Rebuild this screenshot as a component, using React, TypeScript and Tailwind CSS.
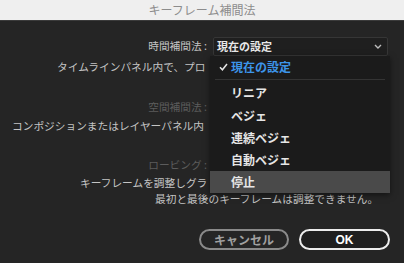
const menuItems = ["リニア", "ベジェ", "連続ベジェ", "自動ベジェ", "停止"];

function Chevron() {
  return (
    <svg width="8" height="5" viewBox="0 0 8 5" className="block">
      <path d="M1 1l3 3 3-3" fill="none" stroke="#bdbdbd" strokeWidth="1.4" />
    </svg>
  );
}

function Check() {
  return (
    <svg width="9" height="8" viewBox="0 0 9 8" className="block">
      <path d="M1 4.3l2.4 2.5L8 1" fill="none" stroke="#e6e6e6" strokeWidth="1.5" />
    </svg>
  );
}

export default function App() {
  return (
    <div className="w-[404px] h-[263px] overflow-hidden bg-[#252525] font-['Noto_Sans_CJK_JP',sans-serif] text-[10.7px] text-[#c4c4c4]">
      {/* Title bar */}
      <div className="h-[21px] bg-[#efefef] border-b border-[#3b3b3b] flex items-center justify-center text-[12px] text-[#8c8c8c]">
        キーフレーム補間法
      </div>

      {/* Time interpolation */}
      <div className="mt-[16px] h-[19px] flex items-center">
        <div className="w-[207px] text-right whitespace-nowrap">時間補間法 :</div>
        <div className="relative ml-[6px] w-[175px] h-[19px]">
          <div className="h-full flex items-center justify-between pl-[3px] pr-[5px] bg-[#1f1f1f] border border-[#363636] rounded-[2px] text-[11px] font-bold text-[#e8e8e8]">
            <span>現在の設定</span>
            <Chevron />
          </div>

          {/* Open dropdown menu */}
          <div className="absolute left-[-3px] top-[19px] w-[180px] h-[137px] bg-[#1b1b1b] shadow-[0_2px_6px_rgba(0,0,0,0.5)] z-10 text-[12px] font-bold text-[#e6e6e6]">
            <div className="h-[22px] flex items-center">
              <div className="w-[21px] flex justify-end pr-[3px]">
                <Check />
              </div>
              <span className="text-[#3d95ea]">現在の設定</span>
            </div>
            <div className="mx-[5px] mt-[1px] h-px bg-[#343434]" />
            <div className="pt-[1px]">
              {menuItems.map((item, i) => (
                <div
                  key={item}
                  className={
                    i === menuItems.length - 1
                      ? "h-[22px] flex items-center pl-[21px] bg-[#4a4a4a]"
                      : i < 2
                        ? "h-[23px] flex items-center pl-[21px]"
                        : "h-[22px] flex items-center pl-[21px]"
                  }
                >
                  {item}
                </div>
              ))}
            </div>
          </div>
        </div>
      </div>
      <div className="h-[22px] flex items-center pl-[57px] whitespace-nowrap">
        タイムラインパネル内で、プロ
      </div>

      {/* Spatial interpolation (disabled) */}
      <div className="mt-[20px] h-[18px] flex items-center">
        <div className="w-[207px] text-right whitespace-nowrap text-[#5c5c5c]">空間補間法 :</div>
      </div>
      <div className="h-[20px] flex items-center pl-[12px] whitespace-nowrap">
        コンポジションまたはレイヤーパネル内
      </div>

      {/* Roving (disabled) */}
      <div className="mt-[20px] h-[18px] flex items-center">
        <div className="w-[207px] text-right whitespace-nowrap text-[#5c5c5c]">ロービング :</div>
      </div>
      <div className="h-[18px] flex items-center pl-[80px] whitespace-nowrap">
        キーフレームを調整しグラ
      </div>
      <div className="h-[14px] flex items-center pl-[155px] whitespace-nowrap">
        最初と最後のキーフレームは調整できません。
      </div>

      {/* Buttons */}
      <div className="mt-[23px] h-[21px] flex justify-end gap-[10px] pr-[14px]">
        <button className="w-[90px] h-full rounded-full border-2 border-[#8a8a8a] text-[12px] font-bold text-[#a0a0a0] flex items-center justify-center">
          キャンセル
        </button>
        <button className="w-[91px] h-full rounded-full border-2 border-[#ececec] bg-[#1f1f1f] text-[12px] font-bold text-white flex items-center justify-center font-['Liberation_Sans',sans-serif]">
          OK
        </button>
      </div>
    </div>
  );
}
